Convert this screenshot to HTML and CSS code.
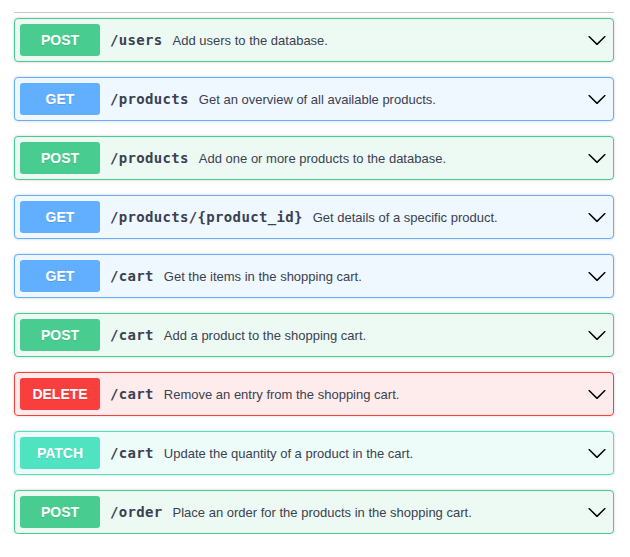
FILE: index.html
```html
<!DOCTYPE html>
<html>
<head>
<meta charset="utf-8">
<link rel="stylesheet" href="styles.css">
</head>
<body>
<div class="wrap">
  <div class="rule"></div>
  <div class="ops">
    <div class="op post"><span class="method">POST</span><span class="path">/users</span><span class="desc">Add users to the database.</span><svg class="arrow" viewBox="0 0 20 20" width="20" height="20"><path d="M17.418 6.109c.272-.268.709-.268.979 0s.271.701 0 .969l-7.908 7.83c-.27.268-.707.268-.979 0l-7.908-7.83c-.27-.268-.27-.701 0-.969.271-.268.709-.268.979 0L10 13.25l7.418-7.141z"/></svg></div>
    <div class="op get"><span class="method">GET</span><span class="path">/products</span><span class="desc">Get an overview of all available products.</span><svg class="arrow" viewBox="0 0 20 20" width="20" height="20"><path d="M17.418 6.109c.272-.268.709-.268.979 0s.271.701 0 .969l-7.908 7.830c-.27.268-.707.268-.979 0l-7.908-7.83c-.27-.268-.27-.701 0-.969.271-.268.709-.268.979 0L10 13.25l7.418-7.141z"/></svg></div>
    <div class="op post"><span class="method">POST</span><span class="path">/products</span><span class="desc">Add one or more products to the database.</span><svg class="arrow" viewBox="0 0 20 20" width="20" height="20"><path d="M17.418 6.109c.272-.268.709-.268.979 0s.271.701 0 .969l-7.908 7.83c-.27.268-.707.268-.979 0l-7.908-7.83c-.27-.268-.27-.701 0-.969.271-.268.709-.268.979 0L10 13.25l7.418-7.141z"/></svg></div>
    <div class="op get"><span class="method">GET</span><span class="path">/products/{product_id}</span><span class="desc">Get details of a specific product.</span><svg class="arrow" viewBox="0 0 20 20" width="20" height="20"><path d="M17.418 6.109c.272-.268.709-.268.979 0s.271.701 0 .969l-7.908 7.83c-.27.268-.707.268-.979 0l-7.908-7.83c-.27-.268-.27-.701 0-.969.271-.268.709-.268.979 0L10 13.25l7.418-7.141z"/></svg></div>
    <div class="op get"><span class="method">GET</span><span class="path">/cart</span><span class="desc">Get the items in the shopping cart.</span><svg class="arrow" viewBox="0 0 20 20" width="20" height="20"><path d="M17.418 6.109c.272-.268.709-.268.979 0s.271.701 0 .969l-7.908 7.83c-.27.268-.707.268-.979 0l-7.908-7.83c-.27-.268-.27-.701 0-.969.271-.268.709-.268.979 0L10 13.25l7.418-7.141z"/></svg></div>
    <div class="op post"><span class="method">POST</span><span class="path">/cart</span><span class="desc">Add a product to the shopping cart.</span><svg class="arrow" viewBox="0 0 20 20" width="20" height="20"><path d="M17.418 6.109c.272-.268.709-.268.979 0s.271.701 0 .969l-7.908 7.83c-.27.268-.707.268-.979 0l-7.908-7.83c-.27-.268-.27-.701 0-.969.271-.268.709-.268.979 0L10 13.25l7.418-7.141z"/></svg></div>
    <div class="op delete"><span class="method">DELETE</span><span class="path">/cart</span><span class="desc">Remove an entry from the shopping cart.</span><svg class="arrow" viewBox="0 0 20 20" width="20" height="20"><path d="M17.418 6.109c.272-.268.709-.268.979 0s.271.701 0 .969l-7.908 7.83c-.27.268-.707.268-.979 0l-7.908-7.83c-.27-.268-.27-.701 0-.969.271-.268.709-.268.979 0L10 13.25l7.418-7.141z"/></svg></div>
    <div class="op patch"><span class="method">PATCH</span><span class="path">/cart</span><span class="desc">Update the quantity of a product in the cart.</span><svg class="arrow" viewBox="0 0 20 20" width="20" height="20"><path d="M17.418 6.109c.272-.268.709-.268.979 0s.271.701 0 .969l-7.908 7.83c-.27.268-.707.268-.979 0l-7.908-7.83c-.27-.268-.27-.701 0-.969.271-.268.709-.268.979 0L10 13.25l7.418-7.141z"/></svg></div>
    <div class="op post"><span class="method">POST</span><span class="path">/order</span><span class="desc">Place an order for the products in the shopping cart.</span><svg class="arrow" viewBox="0 0 20 20" width="20" height="20"><path d="M17.418 6.109c.272-.268.709-.268.979 0s.271.701 0 .969l-7.908 7.83c-.27.268-.707.268-.979 0l-7.908-7.83c-.27-.268-.27-.701 0-.969.271-.268.709-.268.979 0L10 13.25l7.418-7.141z"/></svg></div>
  </div>
</div>
</body>
</html>
```
FILE: styles.css
```css
html, body {
  margin: 0;
  padding: 0;
  background: #fff;
}
.wrap {
  width: 600px;
  padding: 12px 0 0 14px;
  font-family: "Liberation Sans", Arial, sans-serif;
}
.rule {
  height: 1px;
  background: #c8c9cd;
  margin-bottom: 5px;
}
.ops {
  display: flex;
  flex-direction: column;
  gap: 15px;
}
.op {
  display: flex;
  align-items: center;
  height: 42px;
  padding: 0 6px 0 5px;
  border: 1px solid;
  border-radius: 4px;
  box-shadow: 0 0 3px rgba(0,0,0,.19);
}
.method {
  flex: none;
  width: 80px;
  height: 32px;
  line-height: 32px;
  text-align: center;
  border-radius: 3px;
  color: #fff;
  font-weight: 700;
  font-size: 14px;
  text-shadow: 0 1px 0 rgba(0,0,0,.1);
}
.path {
  padding: 0 10px;
  font-family: "DejaVu Sans Mono", monospace;
  font-weight: 700;
  font-size: 14px;
  letter-spacing: 0.33px;
  color: #3b4151;
}
.desc {
  flex: 1;
  font-size: 13px;
  color: #3b4151;
}
.arrow {
  flex: none;
  fill: #000;
}
.post { border-color: #49cc90; background: #edfaf4; }
.post .method { background: #49cc90; }
.get { border-color: #61affe; background: #eff7ff; }
.get .method { background: #61affe; }
.delete { border-color: #f93e3e; background: #feecec; }
.delete .method { background: #f93e3e; }
.patch { border-color: #50e3c2; background: #edfcf9; }
.patch .method { background: #50e3c2; }
```
